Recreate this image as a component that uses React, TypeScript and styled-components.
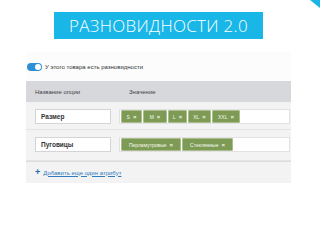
import React from "react";
import styled, { createGlobalStyle } from "styled-components";

const GlobalStyle = createGlobalStyle`
  html, body {
    margin: 0;
    padding: 0;
    background: #ffffff;
  }
  body {
    font-family: "Liberation Sans", Arial, sans-serif;
  }
`;

const Page = styled.div`
  position: relative;
  width: 320px;
  height: 240px;
  overflow: hidden;
  background: #ffffff;
  display: flex;
  flex-direction: column;
`;

// Blue corner in the top right
const Corner = styled.div`
  position: absolute;
  top: 0;
  right: 0;
  width: 0;
  height: 0;
  border-top: 8px solid #1ab4e6;
  border-left: 10px solid transparent;
`;

const Banner = styled.div`
  margin: 12px 0 0 54px;
  width: 209px;
  height: 27px;
  background: #19b6e8;
  color: #ffffff;
  display: flex;
  align-items: center;
  justify-content: center;
  font-family: "Open Sans", "Liberation Sans", sans-serif;
  font-weight: 300;
  font-size: 17px;
  letter-spacing: 0.3px;
`;

const Panel = styled.div`
  margin: 13px 0 0 26px;
  width: 265px;
  background: #f3f3f4;
  display: flex;
  flex-direction: column;
`;

const ToggleRow = styled.div`
  height: 29px;
  background: #fcfcfc;
  display: flex;
  align-items: center;
  gap: 3px;
  padding-left: 1px;
  font-size: 6px;
  color: #333;
`;

const Toggle = styled.div`
  position: relative;
  width: 15px;
  height: 8px;
  border-radius: 4px;
  background: #2d8fd6;
  &::after {
    content: "";
    position: absolute;
    top: 1px;
    right: 1px;
    width: 6px;
    height: 6px;
    border-radius: 50%;
    background: #fff;
  }
`;

const Header = styled.div`
  height: 21px;
  background: #d7d8dc;
  display: grid;
  grid-template-columns: 94px 1fr;
  align-items: center;
  padding-left: 9px;
  font-size: 6px;
  color: #444;
`;

const Row = styled.div<{ $h: number }>`
  height: ${(p) => p.$h}px;
  display: grid;
  grid-template-columns: 76px 1fr;
  column-gap: 8px;
  align-items: start;
  padding: 7px 1px 0 9px;
  box-sizing: border-box;
  border-bottom: 1px solid #e4e4e6;
`;

const NameInput = styled.div`
  height: 15px;
  box-sizing: border-box;
  border: 1px solid #d4d4d6;
  background: #fff;
  display: flex;
  align-items: center;
  padding-left: 5px;
  font-size: 6.5px;
  font-weight: bold;
  color: #333;
`;

const ValueField = styled.div`
  height: 15px;
  box-sizing: border-box;
  border: 1px solid #e2e2e4;
  background: #fff;
  display: flex;
  align-items: center;
  gap: 1px;
  padding-left: 1px;
`;

const Tag = styled.div<{ $w: number }>`
  width: ${(p) => p.$w}px;
  height: 13px;
  box-sizing: border-box;
  background: #7e9b56;
  border: 1px solid #a9be8a;
  border-radius: 1px;
  color: #f4f7ee;
  font-size: 5px;
  display: flex;
  align-items: center;
  justify-content: center;
  gap: 3px;
  white-space: nowrap;
`;

const Close = styled.span`
  font-size: 6px;
  font-weight: bold;
`;

const Footer = styled.div`
  height: 21px;
  border-top: 1px solid #dcdcde;
  display: flex;
  align-items: center;
  padding-left: 9px;
  gap: 3px;
  font-size: 6px;
`;

const Plus = styled.span`
  color: #1f6aa8;
  font-size: 9px;
  font-weight: bold;
  line-height: 1;
`;

const AddLink = styled.span`
  color: #2f7bbd;
  text-decoration: underline;
`;

const sizes = [
  { label: "S", w: 21 },
  { label: "M", w: 24 },
  { label: "L", w: 19 },
  { label: "XL", w: 23 },
  { label: "XXL", w: 28 },
];

const buttons = [
  { label: "Перламутровые", w: 60 },
  { label: "Стеклянные", w: 51 },
];

export default function App() {
  return (
    <Page>
      <GlobalStyle />
      <Corner />
      <Banner>РАЗНОВИДНОСТИ 2.0</Banner>
      <Panel>
        <ToggleRow>
          <Toggle />
          <span>У этого товара есть разновидности</span>
        </ToggleRow>
        <Header>
          <span>Название опции</span>
          <span>Значение</span>
        </Header>
        <Row $h={28}>
          <NameInput>Размер</NameInput>
          <ValueField>
            {sizes.map((t) => (
              <Tag key={t.label} $w={t.w}>
                {t.label}
                <Close>×</Close>
              </Tag>
            ))}
          </ValueField>
        </Row>
        <Row $h={31}>
          <NameInput>Пуговицы</NameInput>
          <ValueField>
            {buttons.map((t) => (
              <Tag key={t.label} $w={t.w}>
                {t.label}
                <Close>×</Close>
              </Tag>
            ))}
          </ValueField>
        </Row>
        <Footer>
          <Plus>+</Plus>
          <AddLink>Добавить еще один атрибут</AddLink>
        </Footer>
      </Panel>
    </Page>
  );
}
